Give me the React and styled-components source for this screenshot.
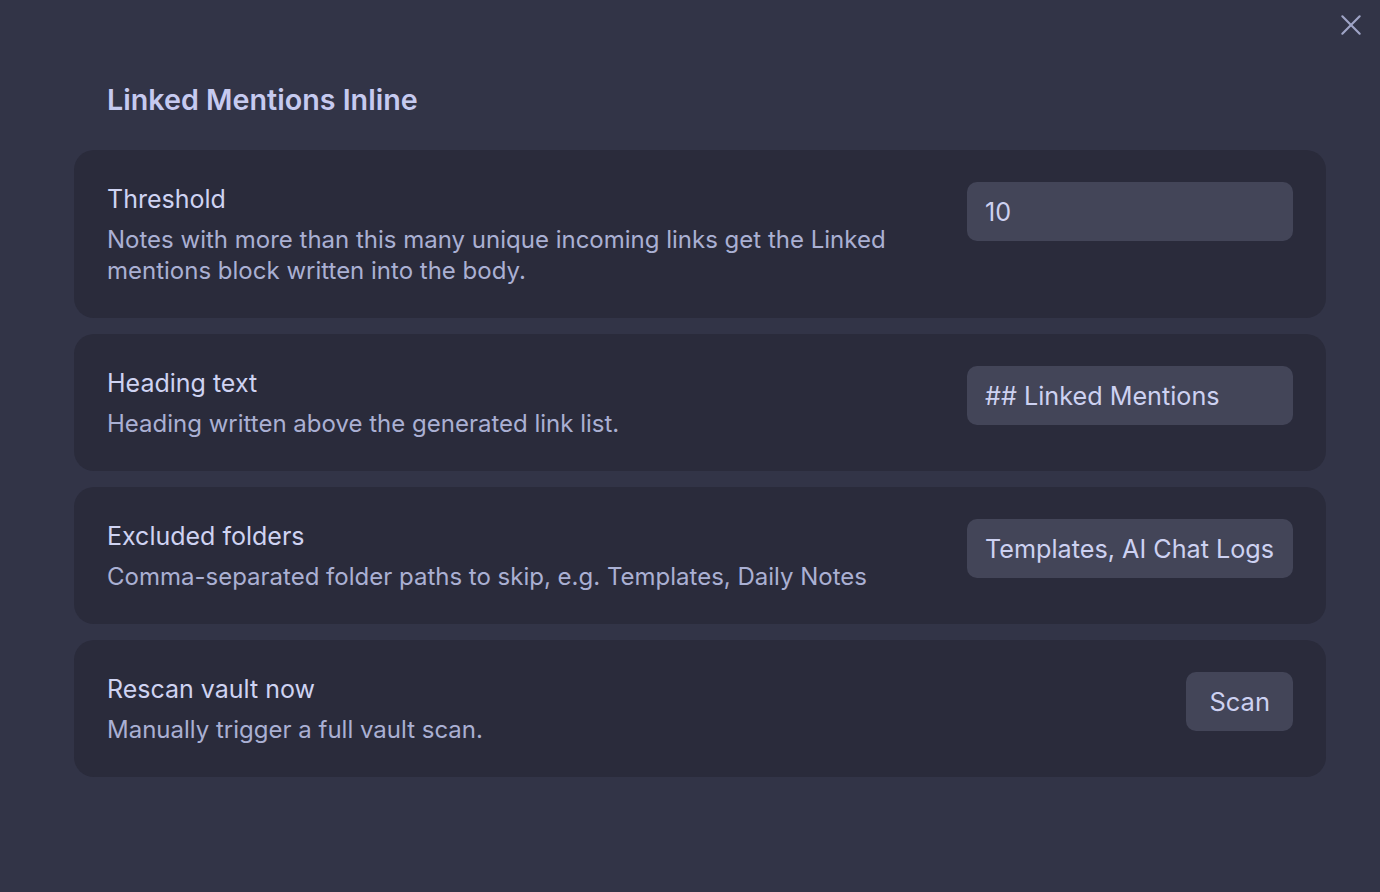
import React from "react";
import styled, { createGlobalStyle } from "styled-components";

const GlobalStyle = createGlobalStyle`
  html, body {
    margin: 0;
    padding: 0;
    background: #323447;
  }
  * {
    box-sizing: border-box;
  }
`;

const settings = [
  {
    name: "Threshold",
    desc: "Notes with more than this many unique incoming links get the Linked mentions block written into the body.",
    control: "input",
    value: "10",
  },
  {
    name: "Heading text",
    desc: "Heading written above the generated link list.",
    control: "input",
    value: "## Linked Mentions",
  },
  {
    name: "Excluded folders",
    desc: "Comma-separated folder paths to skip, e.g. Templates, Daily Notes",
    control: "input",
    value: "Templates, AI Chat Logs",
  },
  {
    name: "Rescan vault now",
    desc: "Manually trigger a full vault scan.",
    control: "button",
    value: "Scan",
  },
];

export default function App() {
  return (
    <>
      <GlobalStyle />
      <Page>
        <CloseButton aria-label="Close">
          <svg width="26" height="26" viewBox="0 0 24 24" fill="none" stroke="currentColor" strokeWidth="2" strokeLinecap="round">
            <path d="M4 4L20 20M20 4L4 20" />
          </svg>
        </CloseButton>
        <Title>Linked Mentions Inline</Title>
        <List>
          {settings.map((s) => (
            <Card key={s.name}>
              <Info>
                <Name>{s.name}</Name>
                <Desc>{s.desc}</Desc>
              </Info>
              {s.control === "input" ? (
                <TextInput defaultValue={s.value} />
              ) : (
                <Button>{s.value}</Button>
              )}
            </Card>
          ))}
        </List>
      </Page>
    </>
  );
}

const Page = styled.div`
  position: relative;
  min-height: 892px;
  padding: 82px 54px 0 74px;
  font-family: Inter, "Noto Sans", sans-serif;
  color: #cdd1f1;
`;

const CloseButton = styled.button`
  position: absolute;
  top: 11px;
  right: 15px;
  display: grid;
  place-items: center;
  width: 28px;
  height: 28px;
  padding: 0;
  border: none;
  background: none;
  color: #9fa4c6;
  cursor: pointer;
`;

const Title = styled.h2`
  margin: 0 0 32px 33px;
  font-size: 28.7px;
  font-weight: 600;
  line-height: 36px;
  color: #c6caf0;
`;

const List = styled.div`
  display: flex;
  flex-direction: column;
  gap: 16px;
`;

const Card = styled.div`
  display: flex;
  align-items: flex-start;
  justify-content: space-between;
  gap: 60px;
  padding: 32px 33px;
  background: #2a2b3b;
  border-radius: 20px;
`;

const Info = styled.div`
  display: flex;
  flex-direction: column;
  gap: 8px;
  flex: 1;
  max-width: 800px;
`;

const Name = styled.div`
  font-size: 25px;
  line-height: 34px;
  color: #cfd3f2;
`;

const Desc = styled.div`
  font-size: 24px;
  line-height: 31px;
  color: #aab0d3;
`;

const TextInput = styled.input`
  flex: none;
  width: 326px;
  height: 59px;
  padding: 0 16px 0 18px;
  border: none;
  border-radius: 10px;
  background: #434558;
  color: #cdd1f1;
  font-family: inherit;
  font-size: 25.2px;
  outline: none;
`;

const Button = styled.button`
  flex: none;
  height: 59px;
  padding: 0 23px;
  border: none;
  border-radius: 10px;
  background: #434558;
  color: #cdd1f1;
  font-family: inherit;
  font-size: 25.5px;
  cursor: pointer;
`;
